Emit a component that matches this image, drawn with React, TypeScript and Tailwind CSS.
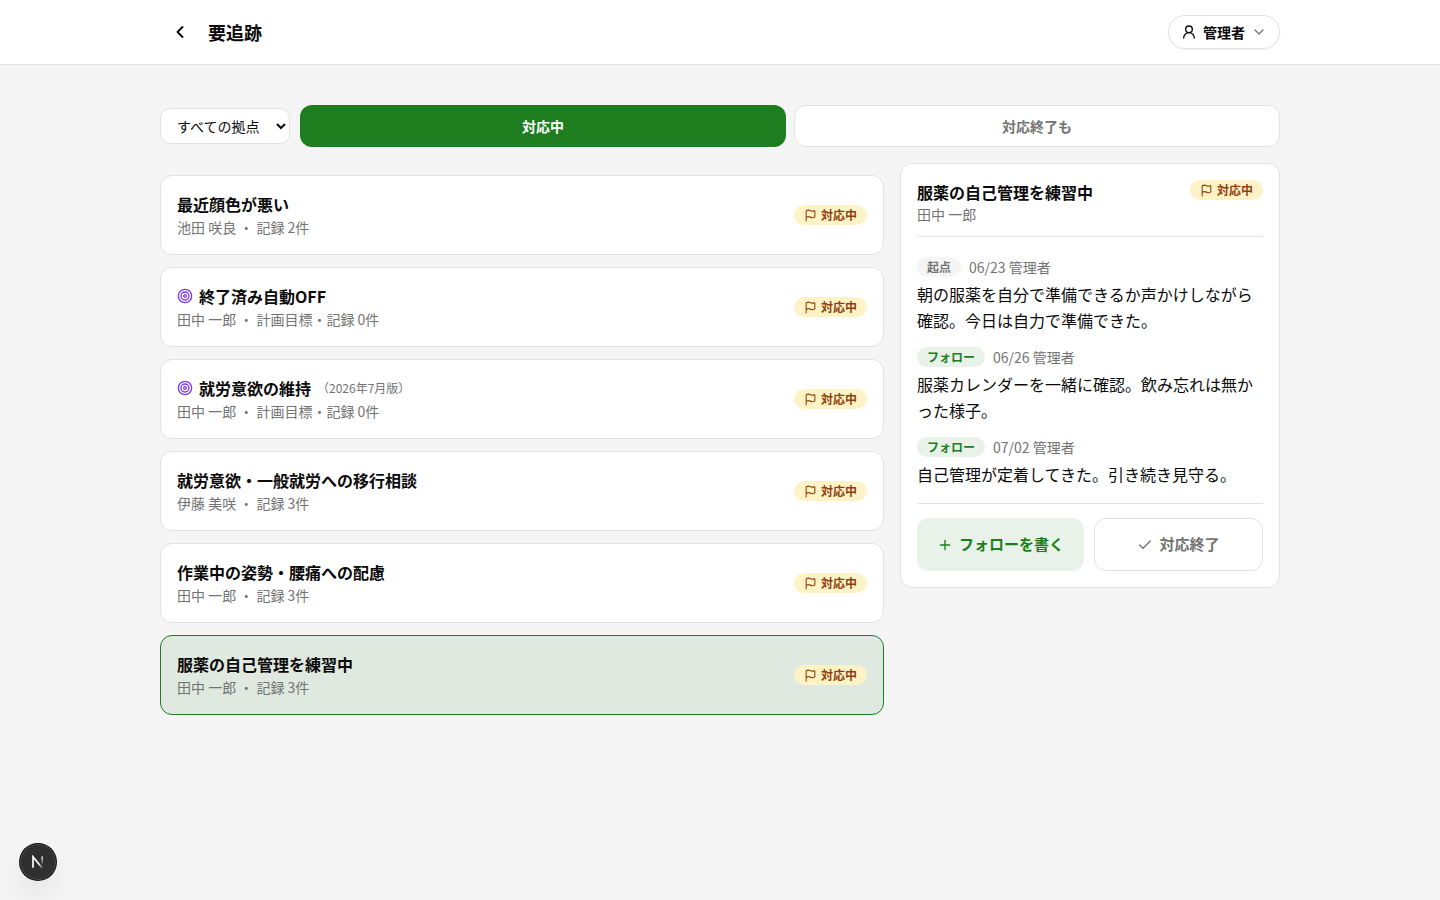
import { Check, ChevronDown, ChevronLeft, Flag, Plus, Target, UserRound } from 'lucide-react';

type FollowItem = {
  title: string;
  version?: string;
  person: string;
  detail: string;
  planGoal?: boolean;
  selected?: boolean;
};

const items: FollowItem[] = [
  { title: '最近顔色が悪い', person: '池田 咲良', detail: '記録 2件' },
  { title: '終了済み自動OFF', person: '田中 一郎', detail: '計画目標・記録 0件', planGoal: true },
  { title: '就労意欲の維持', version: '（2026年7月版）', person: '田中 一郎', detail: '計画目標・記録 0件', planGoal: true },
  { title: '就労意欲・一般就労への移行相談', person: '伊藤 美咲', detail: '記録 3件' },
  { title: '作業中の姿勢・腰痛への配慮', person: '田中 一郎', detail: '記録 3件' },
  { title: '服薬の自己管理を練習中', person: '田中 一郎', detail: '記録 3件', selected: true },
];

const records = [
  { kind: '起点', meta: '06/23 管理者', text: '朝の服薬を自分で準備できるか声かけしながら確認。今日は自力で準備できた。' },
  { kind: 'フォロー', meta: '06/26 管理者', text: '服薬カレンダーを一緒に確認。飲み忘れは無かった様子。' },
  { kind: 'フォロー', meta: '07/02 管理者', text: '自己管理が定着してきた。引き続き見守る。' },
];

function StatusBadge() {
  return (
    <span className="inline-flex h-5 shrink-0 items-center gap-1 rounded-full bg-[#fef3c7] px-[10px] text-xs font-bold text-[#92400e]">
      <Flag className="size-[13px]" strokeWidth={2} aria-hidden />
      対応中
    </span>
  );
}

function Header() {
  return (
    <header className="border-b border-[#e2e2e2] bg-white px-4">
      <div className="mx-auto flex h-16 max-w-[1120px] items-center">
        <button type="button" aria-label="戻る" className="flex size-10 items-center justify-center">
          <ChevronLeft className="size-5" strokeWidth={2.25} aria-hidden />
        </button>
        <h1 className="ml-2 flex-1 text-lg font-bold">要追跡</h1>
        <button
          type="button"
          className="flex h-[34px] items-center gap-1.5 rounded-full border border-[#e2e2e2] bg-white px-3 text-sm font-bold shadow-xs"
        >
          <UserRound className="size-4" strokeWidth={2} aria-hidden />
          管理者
          <ChevronDown className="size-4 text-[#737373]" strokeWidth={2} aria-hidden />
        </button>
      </div>
    </header>
  );
}

function Filters() {
  return (
    <div className="flex items-center gap-[10px]">
      <select
        aria-label="拠点"
        className="h-9 w-[130px] rounded-[10px] border border-[#e2e2e2] bg-white px-3 text-sm"
      >
        <option>すべての拠点</option>
      </select>
      <div className="grid flex-1 grid-cols-2 gap-2">
        <button type="button" aria-pressed="true" className="h-[42px] rounded-xl bg-[#1e7d1e] text-sm font-bold text-white">
          対応中
        </button>
        <button
          type="button"
          aria-pressed="false"
          className="h-[42px] rounded-xl border border-[#e2e2e2] bg-white text-sm font-bold text-[#737373]"
        >
          対応終了も
        </button>
      </div>
    </div>
  );
}

function ItemCard({ item }: { item: FollowItem }) {
  return (
    <button
      type="button"
      className={
        item.selected
          ? 'flex w-full items-center justify-between rounded-xl border border-[#1e7d1e] bg-[#e0e9e0] p-4 text-left'
          : 'flex w-full items-center justify-between rounded-xl border border-[#e2e2e2] bg-white p-4 text-left'
      }
    >
      <span className="flex flex-col">
        <span className="flex items-center gap-1.5 text-base leading-6 font-bold">
          {item.planGoal && <Target className="size-4 text-[#7c3aed]" strokeWidth={2} aria-hidden />}
          {item.title}
          {item.version && <span className="text-xs font-normal text-[#737373]">{item.version}</span>}
        </span>
        <span className="text-sm leading-[22px] text-[#737373]">
          {item.person} ・ {item.detail}
        </span>
      </span>
      <StatusBadge />
    </button>
  );
}

function DetailPanel() {
  return (
    <section className="w-[380px] shrink-0 rounded-xl border border-[#e2e2e2] bg-white p-4">
      <div className="flex items-start justify-between border-b border-[#e2e2e2] pb-3">
        <div>
          <h2 className="text-base leading-6 font-bold">服薬の自己管理を練習中</h2>
          <p className="text-sm leading-5 text-[#737373]">田中 一郎</p>
        </div>
        <StatusBadge />
      </div>
      <ol className="mt-5 flex flex-col gap-[14px] pb-4">
        {records.map((record) => (
          <li key={record.meta}>
            <div className="flex h-5 items-center gap-2 text-sm text-[#737373]">
              <span
                className={
                  record.kind === '起点'
                    ? 'flex h-5 items-center rounded-full bg-[#f5f5f5] px-[10px] text-xs font-bold'
                    : 'flex h-5 items-center rounded-full bg-[#e8f2e8] px-[10px] text-xs font-bold text-[#1e7d1e]'
                }
              >
                {record.kind}
              </span>
              {record.meta}
            </div>
            <p className="mt-1 text-base leading-[26px]">{record.text}</p>
          </li>
        ))}
      </ol>
      <div className="flex gap-[10px] border-t border-[#e2e2e2] pt-[14px]">
        <button
          type="button"
          className="flex h-[53px] flex-1 items-center justify-center gap-1.5 rounded-xl bg-[#e8f2e8] text-[15px] font-bold text-[#1e7d1e]"
        >
          <Plus className="size-4" strokeWidth={2} aria-hidden />
          フォローを書く
        </button>
        <button
          type="button"
          className="flex h-[53px] flex-1 items-center justify-center gap-1.5 rounded-xl border border-[#e2e2e2] bg-white text-[15px] font-bold text-[#737373]"
        >
          <Check className="size-4" strokeWidth={2} aria-hidden />
          対応終了
        </button>
      </div>
    </section>
  );
}

function DevToolsButton() {
  return (
    <button
      type="button"
      aria-label="Next.js"
      className="fixed bottom-5 left-5 flex size-9 items-center justify-center rounded-full border border-[#4a4a4a] bg-[#303030] shadow-[0_0_0_1px_#111,0_16px_32px_-8px_rgba(0,0,0,0.24)]"
    >
      <svg viewBox="0 0 14 14" className="size-[14px]" fill="none" aria-hidden>
        <defs>
          <linearGradient id="stem" x1="11.5" y1="1.5" x2="11.5" y2="10" gradientUnits="userSpaceOnUse">
            <stop stopColor="#fff" />
            <stop offset="1" stopColor="#fff" stopOpacity="0" />
          </linearGradient>
          <linearGradient id="slash" x1="8" y1="8.5" x2="12" y2="13.5" gradientUnits="userSpaceOnUse">
            <stop stopColor="#fff" />
            <stop offset="1" stopColor="#fff" stopOpacity="0" />
          </linearGradient>
        </defs>
        <path d="M11.2 1.5v8.6" stroke="url(#stem)" strokeWidth="1.5" />
        <path d="M2 12.8V1.8L11.6 13.6" stroke="url(#slash)" strokeWidth="1.7" />
      </svg>
    </button>
  );
}

export default function App() {
  return (
    <div
      lang="ja"
      className="min-h-screen bg-[#f5f5f5] font-['Noto_Sans_CJK_JP',sans-serif] text-[#0a0a0a]"
    >
      <Header />
      <main className="mx-auto max-w-[1120px] pt-10">
        <Filters />
        <div className="mt-4 flex items-start gap-4">
          <div className="flex min-w-0 flex-1 flex-col gap-3 pt-3">
            {items.map((item) => (
              <ItemCard key={item.title} item={item} />
            ))}
          </div>
          <DetailPanel />
        </div>
      </main>
      <DevToolsButton />
    </div>
  );
}
